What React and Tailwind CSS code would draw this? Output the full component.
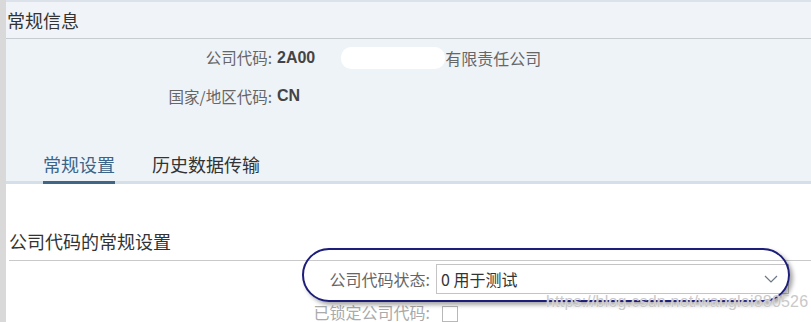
export default function App() {
  const font = { fontFamily: '"Noto Sans CJK SC", "Liberation Sans", sans-serif' };

  return (
    <div
      className="relative flex w-[811px] h-[322px] overflow-hidden bg-white text-[#333]"
      style={font}
    >
      {/* left edge strip */}
      <div className="w-[6px] shrink-0 bg-[#d9d9d9]" />

      <div className="flex-1 flex flex-col">
        {/* header band */}
        <div className="h-[39px] shrink-0 border-t-2 border-b border-[#dbe2ea] border-b-[#c7ccd2] bg-[#f0f4f8] flex items-center pl-[1px]">
          <span className="text-[18px] leading-none text-[#333]">常规信息</span>
        </div>

        {/* object info */}
        <div className="h-[145px] shrink-0 bg-[#eef3f8] border-b-[3px] border-[#d5dfe9] flex flex-col">
          <div className="grid grid-cols-[266px_1fr] gap-x-[5px] gap-y-[17px] pt-[8px] text-[15.5px] leading-[20px]">
            <span className="text-right text-[#666]">公司代码:</span>
            <div className="flex items-center">
              <span className="font-bold text-[16px] text-[#444]" style={{ fontFamily: '"Liberation Sans", sans-serif' }}>
                2A00
              </span>
              <span className="ml-[26px] inline-block w-[104px] h-[22px] rounded-[10px] bg-white" />
              <span className="text-[#666] text-[16px]">有限责任公司</span>
            </div>
            <span className="text-right text-[#666]">国家/地区代码:</span>
            <span className="font-bold text-[16px] text-[#444]" style={{ fontFamily: '"Liberation Sans", sans-serif' }}>
              CN
            </span>
          </div>

          {/* tabs */}
          <div className="mt-auto flex gap-[37px] pl-[37px]">
            <div className="flex flex-col items-center">
              <span className="text-[18px] leading-[24px] text-[#3b6489] pb-[5px]">常规设置</span>
              <span className="w-full h-[3px] -mb-[3px] bg-[#3f6587]" />
            </div>
            <span className="text-[18px] leading-[24px] text-[#333] pb-[5px]">历史数据传输</span>
          </div>
        </div>

        {/* section */}
        <div className="pl-[3px] pt-[45px]">
          <div className="border-b border-[#c9c9c9] pb-[6px]">
            <span className="text-[18px] leading-[24px] text-[#333]">公司代码的常规设置</span>
          </div>

          <div className="grid grid-cols-[421px_353px] gap-x-[6px] items-center mt-[3px] text-[16px]">
            <span className="text-right text-[#666]">公司代码状态:</span>
            <div className="h-[30px] border border-[#c4c4c4] bg-white flex items-center justify-between pl-[4px] pr-[10px]">
              <span className="text-[16px] text-[#333]">0 用于测试</span>
              <svg width="14" height="8" viewBox="0 0 14 8" fill="none">
                <path d="M1 1l6 6 6-6" stroke="#6b7886" strokeWidth="1.2" />
              </svg>
            </div>
            <span className="text-right text-[#aaa] mt-[7px] leading-[20px]">已锁定公司代码:</span>
            <span className="mt-[12px] ml-[6px] w-[16px] h-[16px] border border-[#b8b8b8] bg-white" />
          </div>
        </div>
      </div>

      {/* hand-drawn highlight ellipse */}
      <div className="absolute left-[302px] top-[248px] w-[488px] h-[54px] rounded-[27px] border-2 border-[#1d1d7a] shadow-[3px_3px_4px_rgba(0,0,0,0.35)]" />

      {/* watermark */}
      <span
        className="absolute left-[546px] top-[290px] text-[16px] text-[#c9c9c9] tracking-[0.2px]"
        style={{ fontFamily: '"Liberation Sans", sans-serif', textShadow: "0 0 1px #fff" }}
      >
        https://blog.csdn.net/wanglei880526
      </span>
    </div>
  );
}
